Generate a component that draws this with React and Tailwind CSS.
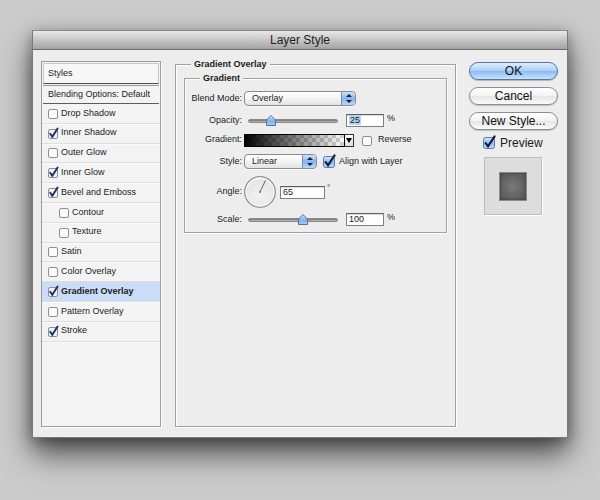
import React from "react";

const listItems = [
    { label: "Drop Shadow", checked: false },
    { label: "Inner Shadow", checked: true },
    { label: "Outer Glow", checked: false },
    { label: "Inner Glow", checked: true },
    { label: "Bevel and Emboss", checked: true },
    { label: "Contour", checked: false, indent: true },
    { label: "Texture", checked: false, indent: true },
    { label: "Satin", checked: false },
    { label: "Color Overlay", checked: false },
    { label: "Gradient Overlay", checked: true, active: true },
    { label: "Pattern Overlay", checked: false },
    { label: "Stroke", checked: true },
];

/* small list checkbox */
const ListCheck = ({ checked }) => (
    <svg width="12" height="11" viewBox="0 0 12 11" className="shrink-0 overflow-visible">
        <rect x="0.5" y="1.5" width="9" height="9" rx="1.5" fill={checked ? "#eef2f9" : "#fbfbfb"} stroke="#8f8f8f" />
        {checked && <path d="M2.2 5.8 L4.3 8.8 L9.6 0.6" stroke="#1d2f5e" strokeWidth="1.9" fill="none" strokeLinecap="round" />}
    </svg>
);

/* aqua checkbox */
const AquaCheck = ({ checked }) => (
    <svg width="13" height="12" viewBox="0 0 13 12" className="shrink-0 overflow-visible">
        <defs>
            <linearGradient id="aq" x1="0" y1="0" x2="0" y2="1">
                <stop offset="0" stopColor="#d7e8fb" />
                <stop offset="0.5" stopColor="#8fbdf0" />
                <stop offset="1" stopColor="#bcdcfb" />
            </linearGradient>
        </defs>
        <rect x="0.5" y="0.5" width="11" height="11" rx="2" fill={checked ? "url(#aq)" : "#fbfbfb"} stroke="#5f7aa3" />
        {checked && <path d="M2.6 6 L5 9.4 L11.6 -0.6" stroke="#121d3c" strokeWidth="2.1" fill="none" strokeLinecap="round" />}
    </svg>
);

const Stepper = () => (
    <div className="w-[14px] h-full shrink-0 rounded-r-[4px] border-l border-[#6f8fc0] bg-gradient-to-b from-[#cfe2fa] via-[#86b5ec] to-[#b8d8fb] flex items-center justify-center">
        <svg width="6" height="9" viewBox="0 0 6 9">
            <path d="M3 0 L6 3 L0 3 Z" fill="#14203f" />
            <path d="M3 9 L6 6 L0 6 Z" fill="#14203f" />
        </svg>
    </div>
);

const Select = ({ value, width }) => (
    <div className={`${width} h-[15px] flex rounded-[4px] border border-[#8a8a8a] bg-gradient-to-b from-white via-[#f4f4f4] to-[#e2e2e2] shadow-[0_1px_0_rgba(255,255,255,0.8)]`}>
        <span className="flex-1 pl-[7px] text-[9px] leading-[13px]">{value}</span>
        <Stepper />
    </div>
);

const Slider = ({ pos }) => (
    <div className="relative w-[90px] h-[15px] ml-[4px] shrink-0">
        <div className="absolute left-0 right-0 top-[6px] h-[4px] rounded-full bg-gradient-to-b from-[#6c6c6c] to-[#c4c4c4] border border-[#8a8a8a]" />
        <svg className="absolute top-[2px]" style={{ left: pos - 5 }} width="10" height="11" viewBox="0 0 10 11">
            <defs>
                <linearGradient id="th" x1="0" y1="0" x2="0" y2="1">
                    <stop offset="0" stopColor="#d5e6fb" />
                    <stop offset="0.55" stopColor="#7fb0ea" />
                    <stop offset="1" stopColor="#a9cdf6" />
                </linearGradient>
            </defs>
            <path d="M5 0.5 L9.5 5 L9.5 10.5 L0.5 10.5 L0.5 5 Z" fill="url(#th)" stroke="#52719f" strokeLinejoin="round" />
        </svg>
    </div>
);

const Field = ({ children, width }) => (
    <div className={`${width} h-[13px] bg-white border border-[#7f7f7f] border-t-[#5e5e5e] shadow-[inset_0_1px_1px_rgba(0,0,0,0.15)] pl-[2px] text-[9px] leading-[11px] shrink-0`}>
        {children}
    </div>
);

const Label = ({ children }) => (
    <span className="w-[57px] mr-[2px] text-right text-[9px] shrink-0">{children}</span>
);

const Button = ({ children, primary }) => (
    <div
        className={`w-[89px] h-[18px] rounded-full border text-[12px] leading-[16px] text-center text-[#111] ${
            primary
                ? "border-[#5577a8] bg-[linear-gradient(#e2eefc_0%,#aacdf6_50%,#8bbbf1_52%,#c9e4fd_100%)] shadow-[0_1px_1px_rgba(0,0,0,0.25)]"
                : "border-[#8d8d8d] bg-[linear-gradient(#ffffff_0%,#f3f3f3_50%,#e6e6e6_52%,#fafafa_100%)] shadow-[0_1px_1px_rgba(0,0,0,0.2)]"
        }`}
    >
        {children}
    </div>
);

const LeftPanel = () => (
    <div className="w-[120px] h-[366px] ml-[8px] mt-[11px] bg-[#f3f3f3] border border-[#9c9c9c] shadow-[1px_1px_0_#fff] flex flex-col text-[9px] shrink-0">
        <div className="h-[21px] mx-[1px] mt-[1px] border border-[#c9c9c9] border-b-[#4d4d4d] bg-[#f7f7f7] flex items-center pl-[4px]">
            Styles
        </div>
        <div className="h-[19px] mx-[1px] mt-[1px] border-t border-[#9a9a9a] border-b border-b-[#5c5c5c] flex items-center pl-[5px]">
            Blending Options: Default
        </div>
        {listItems.map((item) => (
            <div
                key={item.label}
                className={`h-[19.8px] flex items-center border-b border-[#dedede] shadow-[0_1px_0_#fafafa] ${item.indent ? "pl-[17px]" : "pl-[6px]"} ${
                    item.active ? "bg-[#cadcf7] font-bold" : ""
                }`}
            >
                <ListCheck checked={item.checked} />
                <span className="ml-[1px]">{item.label}</span>
            </div>
        ))}
    </div>
);

const Swatch = () => (
    <svg width="101" height="13" viewBox="0 0 101 13" className="shrink-0">
        <defs>
            <pattern id="chk" width="8" height="8" patternUnits="userSpaceOnUse">
                <rect width="8" height="8" fill="#ffffff" />
                <rect width="4" height="4" fill="#d2d2d2" />
                <rect x="4" y="4" width="4" height="4" fill="#d2d2d2" />
            </pattern>
            <linearGradient id="gr" x1="0" y1="0" x2="1" y2="0">
                <stop offset="0" stopColor="#000" stopOpacity="1" />
                <stop offset="1" stopColor="#000" stopOpacity="0" />
            </linearGradient>
        </defs>
        <rect x="0" y="0" width="101" height="13" fill="url(#chk)" />
        <rect x="0" y="0" width="101" height="13" fill="url(#gr)" />
        <rect x="0.5" y="0.5" width="100" height="12" fill="none" stroke="#000" />
    </svg>
);

const Dial = () => (
    <svg width="32" height="32" viewBox="0 0 32 32" className="shrink-0">
        <defs>
            <radialGradient id="dl" cx="0.5" cy="0.6" r="0.6">
                <stop offset="0" stopColor="#f2f2f2" />
                <stop offset="0.8" stopColor="#e6e6e6" />
                <stop offset="1" stopColor="#fdfdfd" />
            </radialGradient>
        </defs>
        <circle cx="16" cy="16" r="15.3" fill="url(#dl)" stroke="#8e8e8e" strokeWidth="1.2" />
        <circle cx="16" cy="16" r="14" fill="none" stroke="#ffffff" strokeWidth="0.8" />
        <line x1="16" y1="16" x2="21.5" y2="4.3" stroke="#666" strokeWidth="1" />
        <circle cx="16" cy="16" r="1" fill="#666" />
    </svg>
);

const MiddlePanel = () => (
    <div className="relative w-[281px] h-[363px] ml-[14px] mt-[14px] border border-[#a0a0a0] shadow-[inset_1px_1px_0_#fff,1px_1px_0_#fff] shrink-0">
        <span className="absolute left-[15px] top-[-7px] px-[3px] bg-[#ededed] text-[9px] font-bold leading-[12px]">
            Gradient Overlay
        </span>
        <div className="relative w-[263px] h-[155px] ml-[8px] mt-[13px] border border-[#a0a0a0] shadow-[inset_1px_1px_0_#fff,1px_1px_0_#fff] pt-[12px] flex flex-col text-[9px]">
            <span className="absolute left-[15px] top-[-7px] px-[3px] bg-[#ededed] font-bold leading-[12px]">Gradient</span>

            <div className="h-[15px] flex items-center">
                <Label>Blend Mode:</Label>
                <Select value="Overlay" width="w-[112px]" />
            </div>

            <div className="h-[15px] mt-[7px] flex items-center">
                <Label>Opacity:</Label>
                <Slider pos={23} />
                <div className="ml-[8px]">
                    <Field width="w-[38px]">
                        <span className="bg-[#b6d2f4] px-[1px]">25</span>
                    </Field>
                </div>
                <span className="ml-[3px] -mt-[3px]">%</span>
            </div>

            <div className="h-[14px] mt-[5px] flex items-center">
                <Label>Gradient:</Label>
                <Swatch />
                <div className="w-[9px] h-[13px] border border-[#333] border-l-0 bg-gradient-to-b from-white to-[#dcdcdc] flex items-center justify-center shrink-0">
                    <svg width="6" height="5" viewBox="0 0 6 5">
                        <path d="M0 0 L6 0 L3 5 Z" fill="#000" />
                    </svg>
                </div>
                <div className="ml-[8px] flex items-center">
                    <ListCheck checked={false} />
                </div>
                <span className="ml-[4px]">Reverse</span>
            </div>

            <div className="h-[15px] mt-[7px] flex items-center">
                <Label>Style:</Label>
                <Select value="Linear" width="w-[73px]" />
                <div className="ml-[6px] flex items-center">
                    <AquaCheck checked />
                </div>
                <span className="ml-[3px]">Align with Layer</span>
            </div>

            <div className="h-[32px] mt-[7px] flex items-center">
                <Label>Angle:</Label>
                <Dial />
                <div className="ml-[4px]">
                    <Field width="w-[45px]">65</Field>
                </div>
                <span className="ml-[2px] -mt-[8px] text-[8px]">°</span>
            </div>

            <div className="h-[15px] mt-[4px] flex items-center">
                <Label>Scale:</Label>
                <Slider pos={55} />
                <div className="ml-[8px]">
                    <Field width="w-[38px]">100</Field>
                </div>
                <span className="ml-[3px] -mt-[3px]">%</span>
            </div>
        </div>
    </div>
);

const RightColumn = () => (
    <div className="ml-[13px] mt-[12px] w-[89px] flex flex-col shrink-0">
        <Button primary>OK</Button>
        <div className="mt-[7px]">
            <Button>Cancel</Button>
        </div>
        <div className="mt-[7px]">
            <Button>New Style...</Button>
        </div>
        <div className="mt-[7px] h-[12px] pl-[14px] flex items-center">
            <AquaCheck checked />
            <span className="ml-[4px] text-[12px] leading-[12px]">Preview</span>
        </div>
        <div className="mt-[8px] ml-[15px] w-[58px] h-[58px] bg-[#dddddd] border border-[#bdbdbd] shadow-[1px_1px_0_#fff] flex items-center justify-center">
            <div className="w-[28px] h-[29px] border border-[#978878] bg-[radial-gradient(circle,#7a7a7a_0%,#626262_60%,#575757_100%)] shadow-[inset_0_0_3px_rgba(0,0,0,0.4)]" />
        </div>
    </div>
);

export default function App() {
    return (
        <div className="w-[600px] h-[500px] bg-[#cbcbcb] pt-[30px] pl-[32px] overflow-hidden font-['Liberation_Sans',Arial,sans-serif] text-[#1b1b1b]">
            <div className="w-[536px] h-[408px] bg-[#ededed] border border-[#7a7a7a] border-t-[#8c8c8c] shadow-[0_16px_28px_rgba(0,0,0,0.62),0_3px_12px_rgba(0,0,0,0.3)] flex flex-col">
                <div className="h-[19px] border-b border-[#6d6d6d] bg-gradient-to-b from-[#e9e9e9] to-[#a3a3a3] flex items-center justify-center text-[12px] text-[#1e1e1e] shrink-0">
                    Layer Style
                </div>
                <div className="flex items-start">
                    <LeftPanel />
                    <MiddlePanel />
                    <RightColumn />
                </div>
            </div>
        </div>
    );
}
